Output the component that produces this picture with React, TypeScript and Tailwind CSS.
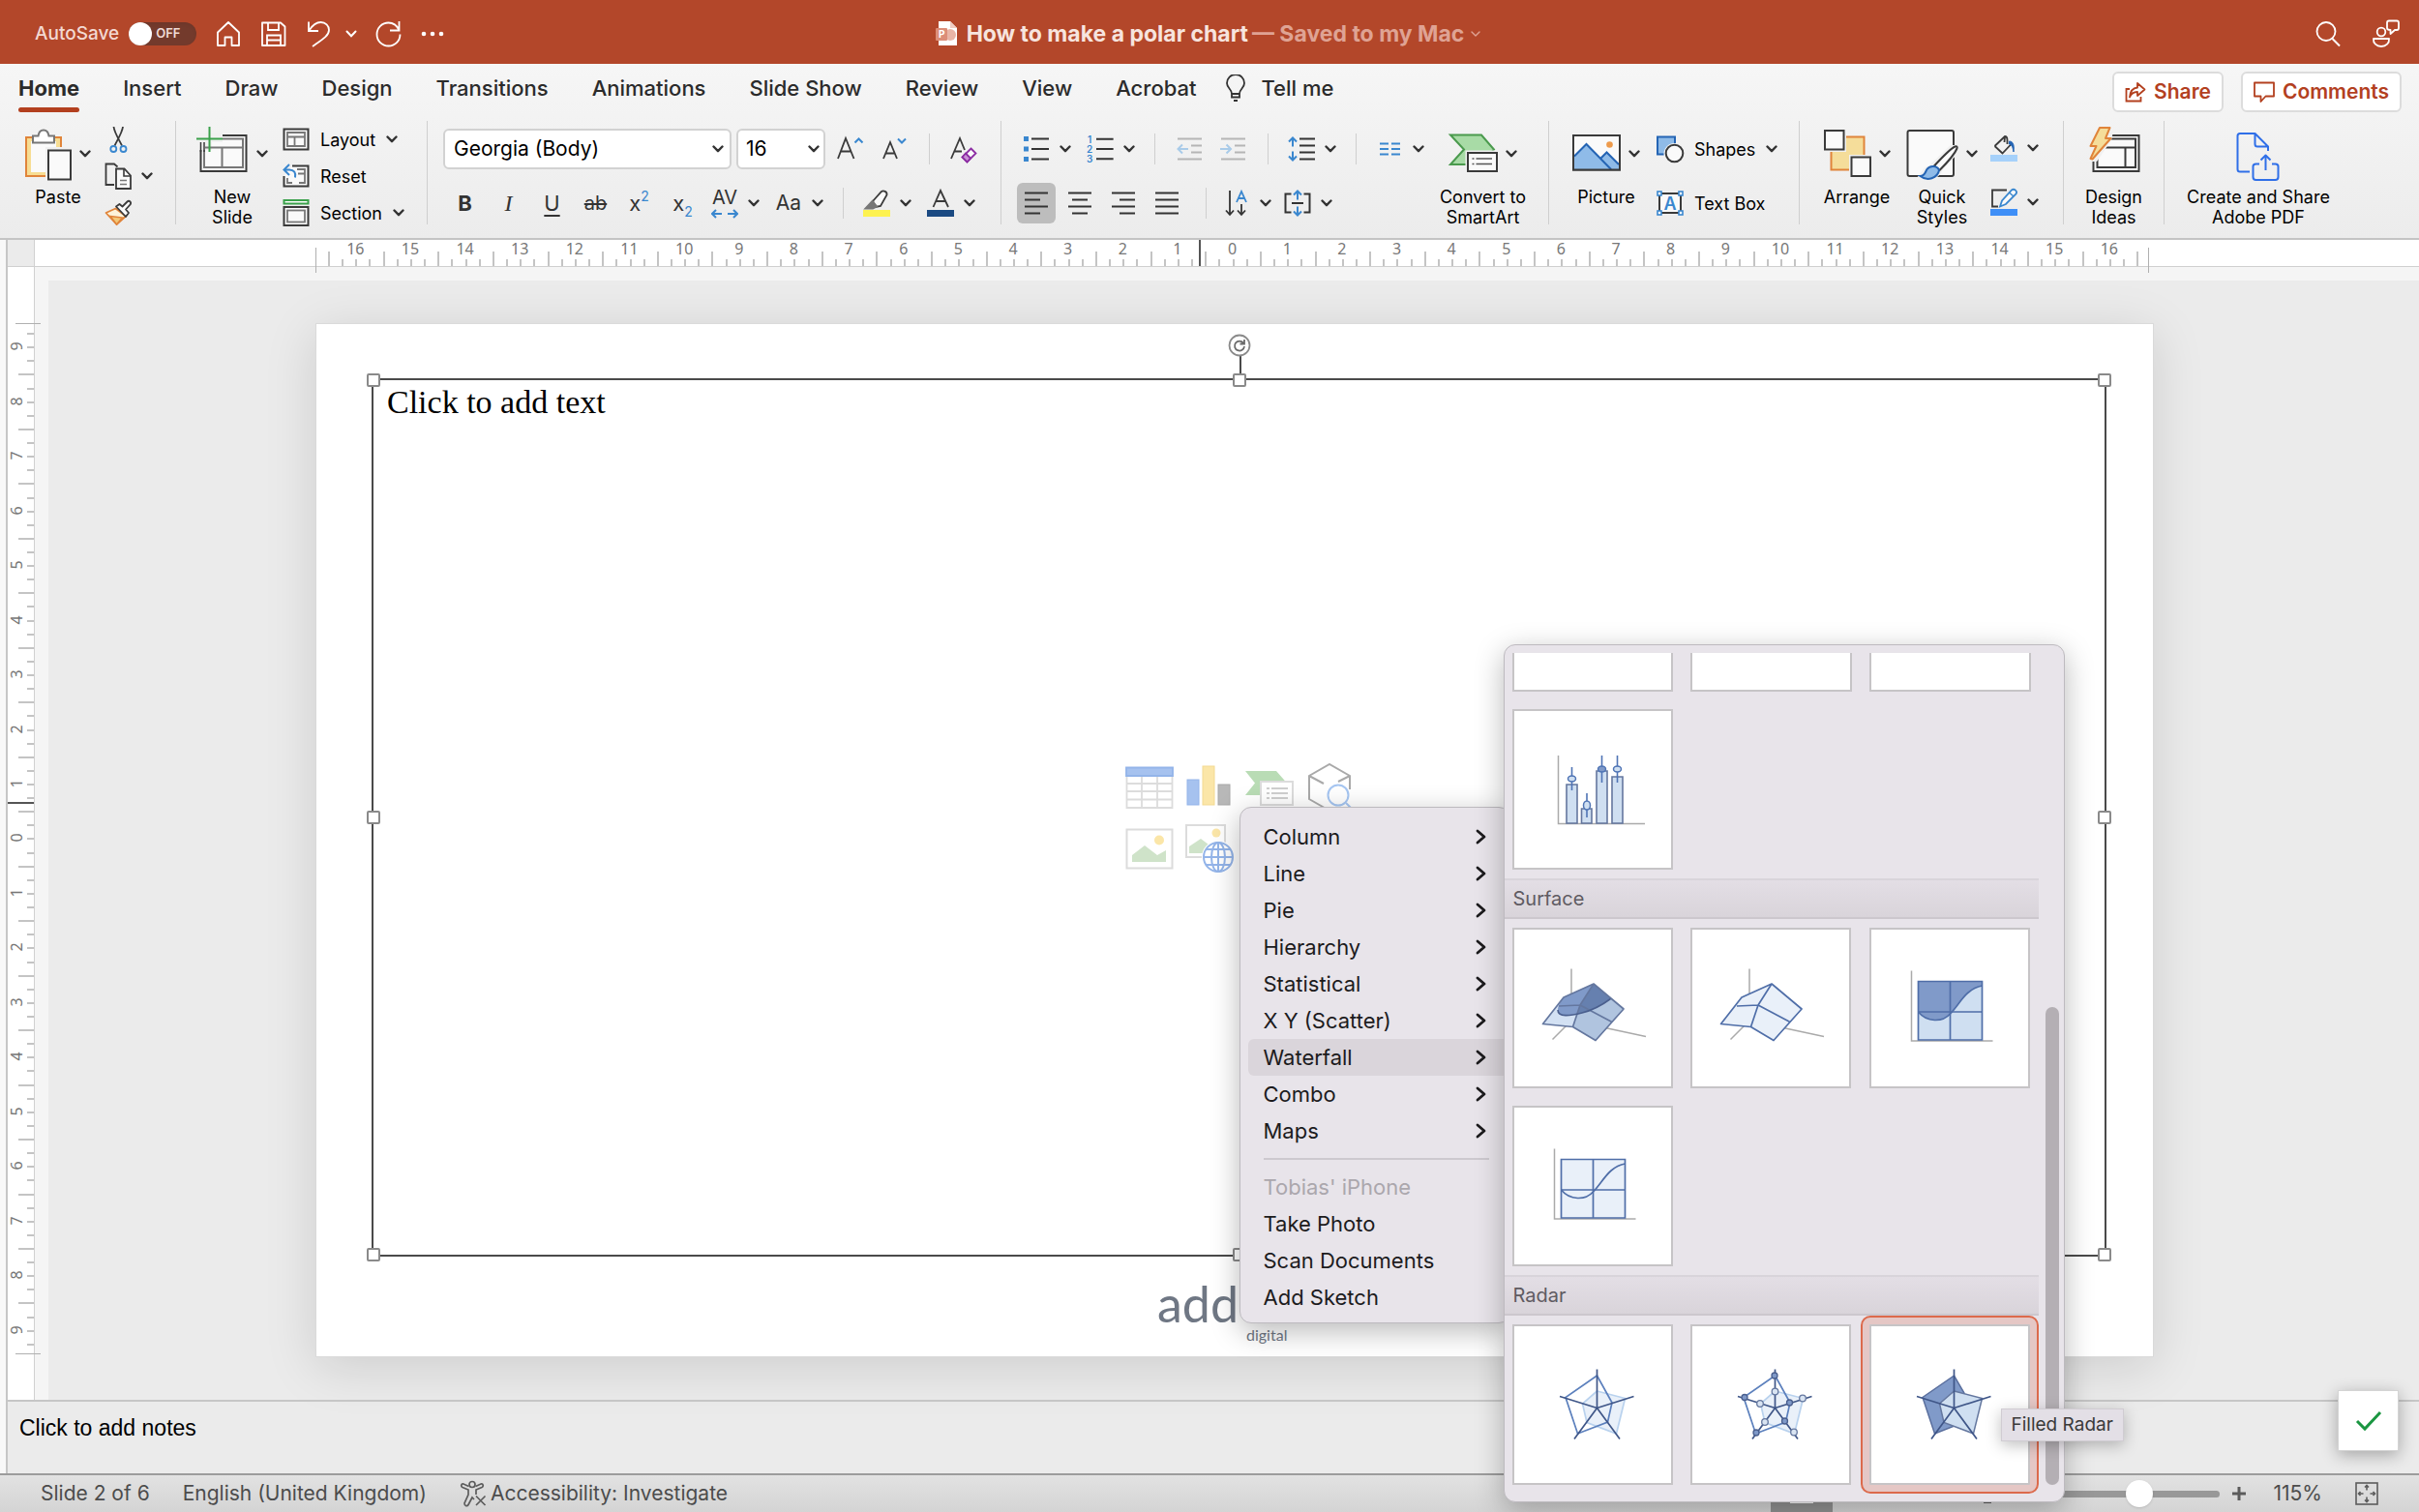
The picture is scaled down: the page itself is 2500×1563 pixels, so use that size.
import type { ReactNode } from "react"
import { ChevronDown } from "lucide-react"
import clsx from "clsx"

const tabs = ["Home", "Insert", "Draw", "Design", "Transitions", "Animations", "Slide Show", "Review", "View", "Acrobat"]

const chartMenu = ["Column", "Line", "Pie", "Hierarchy", "Statistical", "X Y (Scatter)", "Waterfall", "Combo", "Maps"]

const photoMenu = ["Take Photo", "Scan Documents", "Add Sketch"]

const horizontalUnits = Array.from({ length: 33 }, (_, i) => Math.abs(i - 16))
const verticalUnits = Array.from({ length: 19 }, (_, i) => Math.abs(i - 9))

/* ---------- shared bits ---------- */

function Chevron() {
  return (
    <svg width="12" height="8" viewBox="0 0 12 8" fill="none" className="shrink-0">
      <path d="M1.5 1.5 6 6.2l4.5-4.7" stroke="#333" strokeWidth="2.4" strokeLinecap="round" strokeLinejoin="round" />
    </svg>
  )
}

function Icon({ children, w = 28, h = 28 }: { children: ReactNode; w?: number; h?: number }) {
  return (
    <svg width={w} height={h} viewBox={`0 0 ${w} ${h}`} fill="none" stroke="#3a3a3a" strokeWidth="2" className="shrink-0 overflow-visible">
      {children}
    </svg>
  )
}

function GroupLine() {
  return <div className="w-px h-[107px] shrink-0 bg-[#cfcfcf]" />
}

function Divider() {
  return <div className="w-px h-8 mx-5 shrink-0 bg-[#cfcfcf]" />
}

function BigButton({ icon, lines, drop = false, className }: { icon: ReactNode; lines: string[]; drop?: boolean; className?: string }) {
  return (
    <button className={clsx("flex flex-col items-center shrink-0 text-[18px] leading-[21px]", className)}>
      <span className="flex items-center gap-2 h-[68px]">
        {icon}
        {drop && <Chevron />}
      </span>
      {lines.map((line) => (
        <span key={line} className="whitespace-nowrap">{line}</span>
      ))}
    </button>
  )
}

function Tool({ label, children, drop = false }: { label: string; children: ReactNode; drop?: boolean }) {
  return (
    <button aria-label={label} className="flex items-center gap-[10px] shrink-0">
      {children}
      {drop && <Chevron />}
    </button>
  )
}

function TextTool({ label, children, drop = false, className }: { label: string; children: ReactNode; drop?: boolean; className: string }) {
  return (
    <button className={clsx("flex items-center gap-[11px] text-[18px] whitespace-nowrap", className)}>
      {children}
      <span>{label}</span>
      {drop && <Chevron />}
    </button>
  )
}

/* ---------- title bar ---------- */

function TitleBar() {
  return (
    <header className="h-[66px] grid grid-cols-[1fr_auto_1fr] items-center bg-[#b3472a] text-white">
      <div className="flex items-center gap-[19px] pl-9 h-[70px]">
        <label className="flex items-center gap-[10px] text-[19px] font-medium text-[#f3d9d2]">
          AutoSave
          <input type="checkbox" className="sr-only" />
          <span className="flex items-center w-[70px] h-6 rounded-full bg-[#733a2c] shadow-inner text-[13px] font-semibold text-[#f0dcd6]">
            <span className="size-6 mr-1 rounded-full bg-white" />
            OFF
          </span>
        </label>
        <button aria-label="Home">
          <Icon>
            <path d="M3 26V12.500L14 2l11 10.500V26h-7.500v-8.500h-7V26z" stroke="#fff" strokeWidth="1.800" strokeLinejoin="round" />
          </Icon>
        </button>
        <button aria-label="Save">
          <Icon>
            <g stroke="#fff" strokeWidth="1.800">
              <path d="M2 2.500h19l4.500 4V26H2z" strokeLinejoin="round" />
              <path d="M8 3v7h11V3M7 26V15.500h14V26M7 20.500h14" />
            </g>
          </Icon>
        </button>
        <div className="flex items-center gap-[13px]">
          <button aria-label="Undo">
            <Icon>
              <path d="M3 1.500V11h10M3.500 10.500C7 5 11 2 15.500 2c5 0 8.500 3.500 8.500 8 0 6-7 10-17 17" stroke="#fff" strokeWidth="1.800" />
            </Icon>
          </button>
          <svg width="12" height="8" viewBox="0 0 12 8" fill="none">
            <path d="M1.500 1.500 6 6.200l4.500-4.700" stroke="#fff" strokeWidth="2" strokeLinecap="round" />
          </svg>
        </div>
        <button aria-label="Redo">
          <Icon>
            <path d="M24.500 1v9.500H15M24.500 10C22 5 18.500 2.500 13.500 2.500c-6.500 0-12 5-12 12s5.500 12 12 12 12-5 12-12" stroke="#fff" strokeWidth="1.800" />
          </Icon>
        </button>
        <button aria-label="More commands">
          <Icon>
            <g fill="#fff" stroke="none">
              <circle cx="3" cy="14" r="2.300" />
              <circle cx="12" cy="14" r="2.300" />
              <circle cx="21" cy="14" r="2.300" />
            </g>
          </Icon>
        </button>
      </div>

      <h1 className="flex items-center h-[70px] text-[23px] font-bold text-[#f7e4de]">
        <svg width="24" height="26" viewBox="0 0 24 26" className="mr-2">
          <path d="M3 0h12l7 7v18H3z" fill="#fff" />
          <path d="M15 0l7 7h-7z" fill="#f0cdc3" />
          <circle cx="15" cy="14" r="6" fill="#e9b5a6" />
          <rect x="0" y="7" width="12" height="13" rx="1" fill="#dc8e78" />
          <text x="3" y="17" fontSize="10" fontWeight="700" fill="#fff" fontFamily="Inter, sans-serif">P</text>
        </svg>
        How to make a polar chart
        <span className="ml-1 text-[#dfa394]">— Saved to my Mac</span>
        <ChevronDown className="ml-1 size-4 text-[#dfa394]" strokeWidth={2} />
      </h1>

      <div className="flex items-center justify-end gap-8 h-[70px] pr-5">
        <button aria-label="Search">
          <Icon>
            <path d="M18.500 19l7.500 7.500" stroke="#fff" />
            <circle cx="12" cy="11.500" r="9.500" stroke="#fff" strokeWidth="1.800" />
          </Icon>
        </button>
        <button aria-label="Account">
          <Icon>
            <g stroke="#fff" strokeWidth="1.800" strokeLinejoin="round">
              <circle cx="9" cy="12" r="4.300" />
              <path d="M1 19h16c.5 4.500-3 8-8 8s-8.500-3.500-8-8z" />
              <path d="M15 2.500c0-1.500.5-2 2-2h8c1.500 0 2 .5 2 2V8c0 1.500-.5 2-2 2h-2l-4.500 4v-4C16.500 10 15 9.500 15 8z" />
            </g>
          </Icon>
        </button>
      </div>
    </header>
  )
}

/* ---------- ribbon icons ---------- */

function PasteIcon() {
  return (
    <Icon w={48} h={56}>
      <rect x="1" y="11" width="36" height="40" fill="#f7dd93" stroke="#e0843a" />
      <rect x="6" y="15" width="26" height="32" fill="#fafafa" stroke="none" />
      <path d="M8 16.500V9.500h5.500c.5-3.500 2.500-6 5.500-6s5 2.500 5.500 6H30v7z" fill="#fff" stroke="#777" />
      <path d="M21 21h28v35H21z" fill="#f1f1f1" stroke="none" />
      <rect x="24" y="24.500" width="23" height="30" fill="#fafafa" />
    </Icon>
  )
}

function CutIcon() {
  return (
    <Icon>
      <path d="M9.500 1c.5 5 3 9 8.500 19.500M19 1c-.5 5-3 9-8.500 19.500" strokeWidth="1.800" />
      <circle cx="9.300" cy="24" r="3" stroke="#3a87cf" strokeWidth="1.800" />
      <circle cx="19.500" cy="24" r="3" stroke="#3a87cf" strokeWidth="1.800" />
    </Icon>
  )
}

function CopyIcon() {
  return (
    <Icon>
      <path d="M10 23H1.500V1.500H10l3.500 3" strokeWidth="1.800" />
      <path d="M12 6.500h8.500l6.500 7v13.500H12z" fill="#fafafa" strokeWidth="1.800" />
      <path d="M20 7v7h7" strokeWidth="1.600" />
      <path d="M16 18.500h7M16 22.500h7" stroke="#777" strokeWidth="1.500" />
    </Icon>
  )
}

function PainterIcon() {
  return (
    <Icon>
      <path d="M11.500 9.500 1.500 14l11 12 9.500-8.500z" fill="#fdf3da" stroke="#e0843a" strokeWidth="1.800" strokeLinejoin="round" />
      <path d="M6 17.500l12.500 1.500-6 7z" fill="#f3c878" stroke="#e0843a" strokeWidth="1.500" />
      <path d="M12 7.500l3.500-2.500 3 2.500 5-5c2-2 5 1 3 3l-4.500 5 3 3.500-3 4z" fill="#fafafa" strokeWidth="1.800" strokeLinejoin="round" />
    </Icon>
  )
}

function NewSlideIcon() {
  return (
    <Icon w={54} h={56}>
      <rect x="4.500" y="9" width="47" height="37" fill="#fafafa" />
      <path d="M8 12.500h40V42H8zM8 21.500h40M26.500 21.500V42" stroke="#777" />
      <path d="M0 7h27v9H16v8H3v-8H0z" fill="#f1f1f1" stroke="none" />
      <path d="M9 21.500h7" stroke="#777" />
      <path d="M4.500 16v10M8 16v10" stroke="#3a3a3a" strokeWidth="1.500" />
      <path d="M0 12.500h27M13.500 0v26" stroke="#3aa14b" />
    </Icon>
  )
}

function LayoutIcon() {
  return (
    <Icon>
      <rect x="1.500" y="3.500" width="25" height="21" fill="#fafafa" />
      <path d="M5 7h18v14H5zM5 11.500h18M12.500 11.500V21" stroke="#777" strokeWidth="1.800" />
    </Icon>
  )
}

function ResetIcon() {
  return (
    <Icon>
      <path d="M10 3.500h16.500v21h-25V14" fill="#fafafa" />
      <path d="M15 7h8v14h-6M5 16v5h5M16 11.500h7" stroke="#777" strokeWidth="1.800" />
      <path d="M7 2 1.500 7.500 7 13M2 7.500h5c5 0 7 3 6 8" stroke="#3a87cf" />
    </Icon>
  )
}

function SectionIcon() {
  return (
    <Icon>
      <rect x="1.500" y="1" width="25" height="3.500" fill="#fff" stroke="#3aa14b" />
      <rect x="1.500" y="8" width="25" height="19" fill="#fafafa" />
      <rect x="5" y="11.500" width="18" height="12" stroke="#777" strokeWidth="1.800" />
    </Icon>
  )
}

function SmartArtIcon() {
  return (
    <Icon w={51} h={56}>
      <path d="M2 8.500h32l13 15-13 15.500H2l14-15.500z" fill="#a8dba6" stroke="#4a9a4d" />
      <path d="M17.500 24.500H51V49H17.500z" fill="#f1f1f1" stroke="none" />
      <rect x="20" y="27" width="30" height="19" fill="#fafafa" />
      <path d="M24.500 33h2M28.500 33H45M24.500 38.500h2M28.500 38.500H45" stroke="#555" strokeWidth="1.600" />
    </Icon>
  )
}

function PictureIcon() {
  return (
    <Icon w={50} h={56}>
      <rect x="1" y="9" width="48" height="35.500" fill="#fafafa" />
      <path d="M2 30.500 14.500 18l26 26H2z" fill="#8fbbe8" stroke="none" />
      <path d="M29.500 32l6-5.500L48 39v5h-7z" fill="#8fbbe8" stroke="none" />
      <path d="M2 30.500 14.500 18l25.500 26M29.500 32.500l6-6L48 39" stroke="#2464b4" />
      <circle cx="38.500" cy="18.500" r="3.300" fill="#ee9b4c" stroke="none" />
      <rect x="1" y="9" width="48" height="35.500" />
    </Icon>
  )
}

function ShapesIcon() {
  return (
    <Icon>
      <rect x="1" y="1.500" width="18" height="18" fill="#8fbbe8" stroke="#2464b4" />
      <circle cx="18.500" cy="19" r="11" fill="#f1f1f1" stroke="none" />
      <circle cx="18.500" cy="18.500" r="8.800" fill="#fafafa" />
    </Icon>
  )
}

function TextBoxIcon() {
  return (
    <Icon>
      <path d="M3 4h22v20H3z" fill="#fafafa" />
      <text x="14" y="20.500" textAnchor="middle" fontSize="18" fontWeight="600" fill="#3a87cf" stroke="none" fontFamily="Inter, sans-serif">A</text>
      <g fill="#fff" stroke="#3a87cf" strokeWidth="1.600">
        <rect x="1" y="2" width="4" height="4" />
        <rect x="23" y="2" width="4" height="4" />
        <rect x="1" y="22" width="4" height="4" />
        <rect x="23" y="22" width="4" height="4" />
      </g>
    </Icon>
  )
}

function ArrangeIcon() {
  return (
    <Icon w={50} h={56}>
      <rect x="8.500" y="10.500" width="34" height="34" fill="#f5dd9a" stroke="#e0843a" />
      <path d="M0 2h24v24H0zM27 29h23v24H27z" fill="#f1f1f1" stroke="none" />
      <rect x="2" y="4" width="19.500" height="19.500" fill="#fafafa" />
      <rect x="29.500" y="31.500" width="19.500" height="19.500" fill="#fafafa" />
    </Icon>
  )
}

function QuickStylesIcon() {
  return (
    <Icon w={54} h={56}>
      <rect x="1.500" y="4" width="47.500" height="47" rx="2" fill="#fafafa" />
      <path d="M10 53c6-3 6-11 14-13L46 19h8v8L38 44c-3 8-10 12-20 12z" fill="#f1f1f1" stroke="none" />
      <path d="M29 40.500C37 32 45 23 50.500 20.500c2-.5 2.500.5 2 2-2.500 6-9.500 14-18 22.500z" fill="#fafafa" />
      <path d="M14.500 51c5 0 5-4 7-7 3-4.500 11-4 12.500 1-1.500 8-12 12-19.500 6z" fill="#8fbbe8" stroke="#2464b4" />
    </Icon>
  )
}

function FillIcon() {
  return (
    <Icon>
      <path d="M4.500 12 15 2c2 0 2.500 1.500 2.500 4v4M4.500 12l8 7.500 9.500-10M15 2l-.5 6" strokeWidth="1.800" />
      <path d="M19.500 7c3.500 0 5.500 3 4.500 11-1-5-1.500-7-4.500-8z" fill="#2464b4" stroke="#2464b4" strokeWidth="1" />
      <rect x="0" y="21" width="28" height="7" fill="#a6d1fa" stroke="none" />
    </Icon>
  )
}

function OutlineIcon() {
  return (
    <Icon>
      <path d="M8 18.500H2v-17h15" strokeWidth="1.800" />
      <path d="M10 18.500l2-6L22 1.500c2.500-2 6.500 1 4.500 4L16 16z" fill="#fafafa" stroke="#3a87cf" strokeWidth="1.800" />
      <path d="M19.500 4l4.500 4" stroke="#3a87cf" strokeWidth="1.500" />
      <rect x="0" y="21" width="28" height="7" fill="#3f8ff7" stroke="none" />
    </Icon>
  )
}

function DesignIdeasIcon() {
  return (
    <Icon w={54} h={56}>
      <rect x="5.500" y="9" width="47" height="37" fill="#fafafa" />
      <path d="M9.500 12.500H49V42H9.500zM9.500 21.500H49M38.500 21.500V42" />
      <path d="M2 5h24L24 14 9 36H0z" fill="#f1f1f1" stroke="none" />
      <path d="M12 1h10.500L18 12h5.500L4.500 33.500 2.500 33 8.500 20H2.500z" fill="#f5dd9a" stroke="#e0843a" strokeLinejoin="round" />
    </Icon>
  )
}

function PdfIcon() {
  return (
    <Icon w={46} h={56}>
      <g stroke="#2f6fe8" strokeLinejoin="round">
        <path d="M14 46.500H4c-2 0-2.500-1-2.500-2.500V9.500C1.500 8 2 7 4 7h15.500L33 20.500V25M19.500 7v11c0 1.500.5 2.500 2.500 2.500h11" />
        <path d="M24 38.500h-3.500c-2 0-3 1-3 2.500v11c0 2 1 3 3 3h20c2 0 3-1 3-3V41c0-1.500-1-2.500-3-2.500H37" />
        <path d="M30.500 45V29.500M25.500 34.500l5-5 5 5" />
      </g>
    </Icon>
  )
}

function LinesIcon({ rows, color = "#333" }: { rows: [number, number][]; color?: string }) {
  return (
    <Icon>
      {rows.map(([x1, x2], i) => (
        <path key={i} d={`M${x1} ${3.5 + i * 7}H${x2}`} stroke={color} />
      ))}
    </Icon>
  )
}

/* ---------- ribbon ---------- */

function FontControls() {
  return (
    <div className="shrink-0 pl-4 pr-[25px]">
      <div className="flex items-center h-[58px]">
        <div className="relative mr-[5px]">
          <select aria-label="Font" className="appearance-none w-[298px] h-[42px] pl-[9px] rounded-md border-2 border-[#d2d2d2] bg-white text-[21px]">
            <option>Georgia (Body)</option>
          </select>
          <span className="absolute right-2 top-0 flex items-center h-full pointer-events-none"><Chevron /></span>
        </div>
        <div className="relative mr-[11px]">
          <select aria-label="Font size" className="appearance-none w-[92px] h-[42px] pl-2 rounded-md border-2 border-[#d2d2d2] bg-white text-[21px]">
            <option>16</option>
          </select>
          <span className="absolute right-[6px] top-0 flex items-center h-full pointer-events-none"><Chevron /></span>
        </div>
        <div className="flex items-center gap-4">
          <Tool label="Increase font size">
            <Icon w={30}>
              <path d="M2 24 10 3l8.500 21M5 16.500h10.500" strokeWidth="1.800" />
              <path d="M19.500 7.500l4-4 4 4" stroke="#3a87cf" />
            </Icon>
          </Tool>
          <Tool label="Decrease font size">
            <Icon w={30}>
              <path d="M3 24 10 7l7 17M5.500 18.500h9" strokeWidth="1.800" />
              <path d="M18 3.500l4 4 4-4" stroke="#3a87cf" />
            </Icon>
          </Tool>
        </div>
        <Divider />
        <Tool label="Clear formatting">
          <Icon>
            <path d="M2 24 11 3l5 12M5.500 16.500H13" strokeWidth="1.800" />
            <path d="M22.500 13.500l5 5-9 9-5-5z" fill="#fafafa" stroke="#8c2da3" strokeWidth="1.800" />
            <path d="M17 18.500l5 5-3.500 4-5-5z" fill="#c98fd6" stroke="#8c2da3" strokeWidth="1.800" />
          </Icon>
        </Tool>
      </div>

      <div className="flex items-center h-[54px] text-[22px] text-[#333]">
        <div className="flex mr-[7px] *:w-[45px]">
          <button className="font-bold">B</button>
          <button className="font-['Liberation_Serif'] text-[24px] italic">I</button>
          <button className="underline underline-offset-4">U</button>
          <button className="text-[20px] line-through">ab</button>
          <button aria-label="Superscript" className="flex items-center justify-center">
            x<span className="mb-4 text-[14px] text-[#3a87cf]">2</span>
          </button>
          <button aria-label="Subscript" className="flex items-center justify-center">
            x<span className="mt-4 text-[14px] text-[#3a87cf]">2</span>
          </button>
        </div>
        <div className="flex gap-4">
          <Tool label="Character spacing" drop>
            <span className="relative w-7 h-8 text-[20px] leading-[20px]">
              AV
              <svg width="28" height="10" viewBox="0 0 28 10" fill="none" stroke="#3a87cf" strokeWidth="2" className="absolute left-0 bottom-0">
                <path d="M1 5h10M5 1 1 5l4 4M17 5h10M23 1l4 4-4 4" />
              </svg>
            </span>
          </Tool>
          <Tool label="Change case" drop>
            <span className="w-7 text-[21px]">Aa</span>
          </Tool>
        </div>
        <Divider />
        <div className="flex gap-4">
          <Tool label="Text highlight colour" drop>
            <Icon>
              <path d="M10 12 19 2c2-1.500 6 0 5.500 3.500L18 17l-5 1z" fill="#fafafa" strokeWidth="1.800" />
              <path d="M9.500 12 14 17.500l-4 2H2.500z" fill="#777" stroke="#777" />
              <rect x="0" y="21" width="28" height="7" fill="#fdf250" stroke="none" />
            </Icon>
          </Tool>
          <Tool label="Font colour" drop>
            <Icon>
              <path d="M6.500 18 14 1l8 17M9.500 12h9.500" strokeWidth="1.800" />
              <rect x="0" y="21" width="28" height="7" fill="#1b4a82" stroke="none" />
            </Icon>
          </Tool>
        </div>
      </div>
    </div>
  )
}

function ParagraphControls() {
  return (
    <div className="shrink-0 w-[438px] pl-4">
      <div className="flex items-center h-[58px] pl-[6px]">
        <div className="flex gap-4">
          <Tool label="Bullets" drop>
            <Icon>
              <path d="M9 3.500h18M9 14h18M9 24.500h18" stroke="#333" />
              <path d="M1 1h5v5H1zM1 11.500h5v5H1zM1 22h5v5H1z" fill="#3a87cf" stroke="none" />
            </Icon>
          </Tool>
          <Tool label="Numbering" drop>
            <span className="flex items-center gap-1 w-7">
              <span className="flex flex-col text-[10px] leading-[10px] font-semibold text-[#3a87cf]">
                <span>1</span>
                <span>2</span>
                <span>3</span>
              </span>
              <svg width="18" height="28" viewBox="0 0 18 28" stroke="#333" strokeWidth="2">
                <path d="M0 3.500h18M0 14h18M0 24.500h18" />
              </svg>
            </span>
          </Tool>
        </div>
        <Divider />
        <div className="flex gap-4">
          <Tool label="Decrease indent">
            <Icon w={30}>
              <path d="M3 3.500h25M17 10.500h11M17 17.500h11M3 24.500h25" stroke="#b5b5b5" />
              <path d="M3 14h11M8 9.500 3.500 14 8 18.500" stroke="#a9cbe9" />
            </Icon>
          </Tool>
          <Tool label="Increase indent">
            <Icon w={30}>
              <path d="M2 3.500h25M16 10.500h11M16 17.500h11M2 24.500h25" stroke="#b5b5b5" />
              <path d="M1 14h11M7.500 9.500 12 14l-4.500 4.500" stroke="#a9cbe9" />
            </Icon>
          </Tool>
        </div>
        <Divider />
        <Tool label="Line spacing" drop>
          <Icon>
            <path d="M12 3.500h16M12 10.500h16M12 17.500h16M12 24.500h16" stroke="#333" />
            <path d="M5 3v8.500M1 6.500l4-4 4 4M5 16.500V25M1 21.500l4 4 4-4" stroke="#3a87cf" />
          </Icon>
        </Tool>
        <Divider />
        <Tool label="Columns" drop>
          <Icon>
            <path d="M4 8.500h9M4 14h9M4 19.500h9M16 8.500h9M16 14h9M16 19.500h9" stroke="#3a87cf" />
          </Icon>
        </Tool>
      </div>

      <div className="flex items-center h-[54px]">
        <div className="flex gap-[5px] *:flex *:items-center *:justify-center *:w-10 *:h-[42px] *:rounded-md">
          <button aria-label="Align left" className="bg-[#bdbdbd]">
            <LinesIcon rows={[[2, 26], [2, 18], [2, 26], [2, 18]]} />
          </button>
          <button aria-label="Centre">
            <LinesIcon rows={[[2, 26], [6, 22], [2, 26], [6, 22]]} />
          </button>
          <button aria-label="Align right">
            <LinesIcon rows={[[2, 26], [10, 26], [2, 26], [10, 26]]} />
          </button>
          <button aria-label="Justify">
            <LinesIcon rows={[[2, 26], [2, 26], [2, 26], [2, 26]]} />
          </button>
        </div>
        <Divider />
        <div className="flex gap-[13px]">
          <Tool label="Text direction" drop>
            <Icon w={25}>
              <path d="M4 1v25M0 21.500l4 4.500 4-4.500M16 15v11M12 21.500l4 4.500 4-4.500" stroke="#333" strokeWidth="1.800" />
              <path d="M11 13l5-11 5 11M13 9h6.500" stroke="#3a87cf" strokeWidth="1.800" />
            </Icon>
          </Tool>
          <Tool label="Align text" drop>
            <Icon>
              <path d="M7.500 4.500H1.500v19h6M20.500 4.500h6v19h-6M8 14h12" stroke="#333" />
              <path d="M14 1.500v9M10 5.500l4-4 4 4M14 17.500v9M10 22.500l4 4 4-4" stroke="#3a87cf" />
            </Icon>
          </Tool>
        </div>
      </div>
    </div>
  )
}

function Ribbon() {
  return (
    <section className="h-[182px] border-b-2 border-[#c4c4c4] bg-gradient-to-b from-[#f6f6f6] to-[#ececec] overflow-hidden">
      <div className="flex items-start h-[59px] pl-[19px] pr-[18px]">
        <nav className="flex gap-[45px] text-[22px] font-medium text-[#2b2b2b]">
          {tabs.map((tab, index) => (
            <button
              key={tab}
              className={clsx("h-[50px] whitespace-nowrap", index === 0 && "relative font-bold after:absolute after:inset-x-0 after:bottom-0 after:h-[5px] after:rounded-full after:bg-[#b3401f]")}
            >
              {tab}
            </button>
          ))}
        </nav>
        <button className="flex items-center gap-4 h-[50px] ml-[31px] text-[22px] font-medium text-[#2b2b2b]">
          <svg width="20" height="28" viewBox="0 0 20 28" fill="none" stroke="#333" strokeWidth="1.800">
            <path d="M6 20c0-5-5-6-5-11a9 9 0 0 1 18 0c0 5-5 6-5 11zM6 20v3.500h8V20M8 27h4" />
          </svg>
          Tell me
        </button>
        <div className="flex gap-[18px] ml-auto pt-2 text-[21px] font-semibold text-[#b3401f]">
          <button className="flex items-center justify-center gap-2 w-[115px] h-[42px] rounded-md border-2 border-[#dcdcdc] bg-white">
            <svg width="22" height="22" viewBox="0 0 22 22" fill="none" stroke="#b3401f" strokeWidth="1.800">
              <path d="M5 8H1.500v12.500h15V16" />
              <path d="M13 2l7.500 6.500L13 15v-4c-4 0-6.500 1.500-8 5.500.5-6 3-9.500 8-10z" strokeLinejoin="round" />
            </svg>
            Share
          </button>
          <button className="flex items-center justify-center gap-2 w-[166px] h-[42px] rounded-md border-2 border-[#dcdcdc] bg-white">
            <svg width="22" height="22" viewBox="0 0 22 22" fill="none" stroke="#b3401f" strokeWidth="1.800">
              <path d="M1 1.500h20v14H12.500L7.500 21v-5.500H1z" strokeLinejoin="round" />
            </svg>
            Comments
          </button>
        </div>
      </div>

      <div className="flex items-start text-black">
        <div className="flex gap-[10px] shrink-0 pl-[22px] pr-[23px]">
          <BigButton icon={<PasteIcon />} lines={["Paste"]} drop className="w-[76px]" />
          <div className="flex flex-col *:h-[38px]">
            <Tool label="Cut"><CutIcon /></Tool>
            <Tool label="Copy" drop><CopyIcon /></Tool>
            <Tool label="Format painter"><PainterIcon /></Tool>
          </div>
        </div>
        <GroupLine />
        <div className="flex gap-[14px] shrink-0 pl-5 pr-[23px]">
          <BigButton icon={<NewSlideIcon />} lines={["New", "Slide"]} drop className="w-[76px]" />
          <div className="flex flex-col w-[126px]">
            <TextTool label="Layout" drop className="h-[38px]"><LayoutIcon /></TextTool>
            <TextTool label="Reset" className="h-[38px]"><ResetIcon /></TextTool>
            <TextTool label="Section" drop className="h-[38px]"><SectionIcon /></TextTool>
          </div>
        </div>
        <GroupLine />
        <FontControls />
        <GroupLine />
        <ParagraphControls />
        <BigButton icon={<SmartArtIcon />} lines={["Convert to", "SmartArt"]} drop className="w-[127px] pr-2" />
        <GroupLine />
        <div className="flex gap-[14px] shrink-0 pl-[21px] pr-[22px]">
          <BigButton icon={<PictureIcon />} lines={["Picture"]} drop className="w-[76px]" />
          <div className="w-[125px]">
            <TextTool label="Shapes" drop className="h-[58px]"><ShapesIcon /></TextTool>
            <TextTool label="Text Box" className="h-[54px]"><TextBoxIcon /></TextTool>
          </div>
        </div>
        <GroupLine />
        <div className="flex gap-3 shrink-0 pl-[21px] pr-[25px]">
          <BigButton icon={<ArrangeIcon />} lines={["Arrange"]} drop className="w-[76px]" />
          <BigButton icon={<QuickStylesIcon />} lines={["Quick", "Styles"]} drop className="w-[76px]" />
          <div className="*:h-[56px]">
            <Tool label="Shape fill" drop><FillIcon /></Tool>
            <Tool label="Shape outline" drop><OutlineIcon /></Tool>
          </div>
        </div>
        <GroupLine />
        <BigButton icon={<DesignIdeasIcon />} lines={["Design", "Ideas"]} className="w-[103px]" />
        <GroupLine />
        <BigButton icon={<PdfIcon />} lines={["Create and Share", "Adobe PDF"]} className="w-[194px]" />
      </div>
    </section>
  )
}

/* ---------- rulers ---------- */

function HorizontalRuler() {
  return (
    <div className="flex-1 relative h-7 pl-[290px] pr-[279px] border-b border-[#d0d0d0] bg-white">
      <div className="relative flex h-full pl-[13px] pr-[11px]">
        <span className="absolute left-0 top-2 w-px h-[26px] bg-[#b0b0b0]" />
        <span className="absolute right-0 top-2 w-px h-[26px] bg-[#b0b0b0]" />
        <span className="absolute left-[913px] top-0 w-[2px] h-full bg-[#555]" />
        {horizontalUnits.map((unit, index) => (
          <div key={index} className="relative flex-1 text-center font-['Noto_Sans'] text-[16px] leading-[18px] text-[#777]">
            {unit}
            <div className="absolute inset-x-0 bottom-0 flex items-end *:flex-1 *:h-[7px] *:border-l-2 *:border-[#c4c4c4]">
              <span className="h-[15px]!" />
              <span />
              <span />
              <span />
            </div>
          </div>
        ))}
        <span className="self-end w-0 h-[15px] border-l-2 border-[#c4c4c4]" />
      </div>
    </div>
  )
}

function VerticalRuler() {
  return (
    <div className="relative flex flex-col w-7 shrink-0 pt-[54px] pb-[44px] border-r border-[#d0d0d0] bg-white">
      <span className="absolute left-2 top-[58px] w-[26px] h-px bg-[#b0b0b0]" />
      <span className="absolute left-2 bottom-[47px] w-[26px] h-px bg-[#b0b0b0]" />
      <span className="absolute left-0 top-[553px] w-full h-[2px] bg-[#555]" />
      {verticalUnits.map((unit, index) => (
        <div key={index} className="relative flex-1 flex items-center font-['Noto_Sans'] text-[16px] leading-[20px] text-[#777]">
          <span className="w-[18px] text-center -rotate-90">{unit}</span>
          <div className="absolute inset-y-0 right-0 flex flex-col items-end *:flex-1 *:w-[7px] *:border-t-2 *:border-[#c4c4c4]">
            <span className={index === 0 ? "border-transparent!" : "w-[16px]!"} />
            <span />
            <span />
            <span />
          </div>
        </div>
      ))}
    </div>
  )
}

/* ---------- chart gallery ---------- */

function Tile({ label, children, selected = false }: { label: string; children: ReactNode; selected?: boolean }) {
  return (
    <button
      aria-label={label}
      className={clsx("size-[166px] border-2 border-[#c6c4c6] bg-white", selected && "relative outline-2 outline-offset-[7px] outline-[#dc6a4c] shadow-[0_0_0_7px_#e5c7c5] rounded-[1px]")}
    >
      <svg viewBox="2 2 162 162" fill="none" className="size-full">{children}</svg>
    </button>
  )
}

function StockChart() {
  return (
    <>
      <path d="M47.500 48v70.500H137" stroke="#aaa" strokeWidth="1.500" />
      <g fill="#cfdff1" stroke="#64779f" strokeWidth="1.600">
        <path d="M56 78h11v40H56zM71.500 103H82v15H71.500zM87 64h11v54H87zM103 70h11v48h-11z" />
      </g>
      <path d="M61.500 60v24M77 87v25M92.500 48v28M108.500 48v28" stroke="#4f74b5" strokeWidth="1.600" />
      <g fill="#cfdff1" stroke="#4f74b5" strokeWidth="1.500">
        <ellipse cx="61.500" cy="72" rx="4" ry="3" />
        <ellipse cx="77" cy="99.500" rx="3.500" ry="4.500" />
        <ellipse cx="92.500" cy="62" rx="4" ry="3" fill="#7f99c8" />
        <ellipse cx="108.500" cy="62" rx="4" ry="3" />
      </g>
    </>
  )
}

function SurfaceChart({ filled = false }: { filled?: boolean }) {
  return (
    <>
      <path d="M61 42.500V96L41.500 115.500M61 96l77 16.500" stroke="#aaa" strokeWidth="1.500" />
      <path d="M31.500 99.500 53 72l31-14-14 22-7.500 22.500z" fill={filled ? "#d3e1f3" : "#e9f0f9"} />
      <path d="M84 58l31 26-29 32.500-23.500-14L70 80z" fill={filled ? "#b0c4df" : "#e9f0f9"} />
      {filled && <path d="M53 72l31-14 17.500 15.500C90 82 80 86 72 88c-12 3-25 5-25-3 0-5 3-9 6-13z" fill="#809ac9" />}
      {filled && <path d="M84 58l17.500 15.500C90 82 80 86 67 89l3-9z" fill="#6680af" />}
      <path
        d="M31.500 99.500 53 72l31-14 31 26-29 32.500-23.500-14zM48 81l22-1 33 17.500M84 58 70 80l-7.500 22.500"
        stroke={filled ? "#64779f" : "#4f6ea8"}
        strokeWidth="1.700"
        strokeLinejoin="round"
      />
      {filled && <path d="M101.500 73.500C90 82 80 86 72 88c-12 3-25 5-25-3" stroke="#4a5f8e" strokeWidth="1.600" />}
    </>
  )
}

function ContourChart({ filled = false }: { filled?: boolean }) {
  return (
    <>
      <path d="M43.500 44.500v72.500h84" stroke="#aaa" strokeWidth="1.500" />
      <path d="M50.500 55.500h66V116h-66z" fill={filled ? "#cfdff1" : "#e9f0f9"} />
      {filled && <path d="M50.500 87c9 11 25 11 33 2 10-10 16-26 33-29v-4.500h-66z" fill="#809ac9" />}
      <path d="M50.500 55.500h66V116h-66zM50.500 87h66M83.500 55.500V116" stroke="#4f6ea8" strokeWidth="1.700" />
      <path d="M50.500 87c9 11 25 11 33 2 10-10 16-26 33-29" stroke="#4f6ea8" strokeWidth="1.700" />
    </>
  )
}

function RadarSpokes() {
  return <path d="M87.500 86.500V46.500M87.500 86.500l38-12M87.500 86.500l-38.500-12M87.500 86.500 111 118.500M87.500 86.500 64 118.500" stroke="#3f5688" strokeWidth="1.700" />
}

const radarMarks = [[87, 53], [56, 75.5], [68, 112], [97.5, 100], [102.5, 81]]
const radarLightMarks = [[87.5, 69.5], [116, 76.5], [107, 111.5], [77, 101], [72, 82]]

function RadarChart({ filled = false, markers = false }: { filled?: boolean; markers?: boolean }) {
  if (filled) {
    return (
      <>
        <path d="M87.500 53 55 75.500l12.500 37.500L88 105 98 71z" fill="#809ac9" stroke="#5a6f9e" strokeWidth="1.500" />
        <path d="M87.500 69l29 7.500-9 36.500L77 101.500 72.500 82z" fill="#cfdff1" stroke="#64779f" strokeWidth="1.500" />
        <RadarSpokes />
      </>
    )
  }
  return (
    <>
      <path d="M87.500 69l29 7.500-9 36.500L77 101.500 72.500 82z" fill="#e9f0f9" stroke="#b9d2ee" strokeWidth="1.700" />
      <path d="M87.500 53 55 75.500l12.500 37.500 31-12 4.500-20z" stroke="#5c80bd" strokeWidth="1.700" />
      <RadarSpokes />
      {markers && radarMarks.map(([x, y]) => <circle key={x} cx={x} cy={y} r="3" fill="#7f99c8" stroke="#4a5f8e" strokeWidth="1.300" />)}
      {markers && radarLightMarks.map(([x, y]) => <circle key={x} cx={x} cy={y} r="3.300" fill="#d9e4f2" stroke="#64779f" strokeWidth="1.300" />)}
    </>
  )
}

function GalleryHeading({ children }: { children: ReactNode }) {
  return (
    <h2 className="flex items-center h-[42px] pl-[9px] border-y-2 border-t-[#d8d4da] border-b-[#ccc7cd] bg-gradient-to-b from-[#e3dee5] to-[#d9d4da] text-[20px] text-[#5f5b62]">
      {children}
    </h2>
  )
}

function ChartGallery() {
  return (
    <div className="absolute -top-[169px] left-[272px] flex w-[580px] rounded-xl border border-[#bdbabf] bg-[#e8e4ea] pt-2 pb-[17px] shadow-[0_8px_30px_rgba(0,0,0,0.28)]">
      <div className="w-[552px]">
        <div className="grid grid-cols-3 gap-[18px] px-2 pb-[9px]">
          {["Open-High-Low", "Volume-High-Low", "Volume-Open-High"].map((name) => (
            <button key={name} aria-label={name} className="h-[40px] border-2 border-t-0 border-[#c6c4c6] bg-white" />
          ))}
          <Tile label="Volume-Open-High-Low-Close"><StockChart /></Tile>
        </div>
        <GalleryHeading>Surface</GalleryHeading>
        <div className="grid grid-cols-3 gap-[18px] px-2 py-[9px]">
          <Tile label="3-D Surface"><SurfaceChart filled /></Tile>
          <Tile label="Wireframe 3-D Surface"><SurfaceChart /></Tile>
          <Tile label="Contour"><ContourChart filled /></Tile>
          <Tile label="Wireframe Contour"><ContourChart /></Tile>
        </div>
        <GalleryHeading>Radar</GalleryHeading>
        <div className="grid grid-cols-3 gap-[18px] px-2 pt-[9px]">
          <Tile label="Radar"><RadarChart /></Tile>
          <Tile label="Radar with Markers"><RadarChart markers /></Tile>
          <Tile label="Filled Radar" selected><RadarChart filled /></Tile>
        </div>
      </div>
      <div className="self-end w-[14px] h-[494px] ml-[7px] rounded-full bg-[#b4afb4]" />
      <div role="tooltip" className="absolute left-[513px] bottom-[62px] flex items-center h-[34px] px-[10px] border border-[#d0ccd2] bg-[#e3dfe6] text-[19px] text-[#3a3a3a] whitespace-nowrap shadow-[0_4px_16px_rgba(0,0,0,0.25)]">
        Filled Radar
      </div>
    </div>
  )
}

function ContextMenu() {
  return (
    <div className="absolute left-1/2 top-1/2 -mt-[11px] w-[280px] rounded-xl border border-[#bdbabf] bg-[#e8e4ea] pt-[11px] pb-[7px] pl-2 text-[22px] text-[#1c1b1d] shadow-[0_8px_30px_rgba(0,0,0,0.28)]">
      {chartMenu.map((item) => (
        <button key={item} className={clsx("flex items-center justify-between w-full h-[38px] pl-4 pr-6 rounded-md", item === "Waterfall" && "bg-[#dad5db]")}>
          {item}
          <svg width="11" height="16" viewBox="0 0 11 16" fill="none" stroke="#1c1b1d" strokeWidth="2.800" strokeLinecap="round" strokeLinejoin="round">
            <path d="M2 2l7 6-7 6" />
          </svg>
        </button>
      ))}
      <hr className="my-[9px] ml-4 mr-[21px] border-t-2 border-[#cdc9cf]" />
      <p className="flex items-center h-[38px] pl-4 text-[#aba7ad]">Tobias&apos; iPhone</p>
      {photoMenu.map((item) => (
        <button key={item} className="flex items-center w-full h-[38px] pl-4">{item}</button>
      ))}
      <ChartGallery />
    </div>
  )
}

/* ---------- slide ---------- */

function InsertIcons() {
  return (
    <div className="absolute inset-0 flex items-center justify-center">
      <div className="grid grid-cols-4 grid-rows-2 gap-x-3 gap-y-[13px] *:size-[50px]">
        <button aria-label="Insert table">
          <svg viewBox="0 0 50 50" fill="none" stroke="#dcdcdc" strokeWidth="1.800">
            <path d="M1.500 5h47v41h-47zM2 21h46M2 29h46M2 37.500h46M17 13v33M33 13v33" />
            <path d="M1 4.500h48V13H1z" fill="#a6c2ef" stroke="#93b4e9" />
          </svg>
        </button>
        <button aria-label="Insert chart">
          <svg viewBox="0 0 50 50" strokeWidth="1">
            <rect x="2" y="17" width="12" height="26" fill="#a6c2ef" stroke="#93b4e9" />
            <rect x="18" y="3" width="12" height="40" fill="#fbe6a8" stroke="#f3da92" />
            <rect x="34" y="22" width="12" height="21" fill="#b8b8b8" stroke="#a8a8a8" />
          </svg>
        </button>
        <button aria-label="Insert SmartArt">
          <svg viewBox="0 0 50 50">
            <path d="M0 8h32l11 12.500L32 33H0l10-12.500z" fill="#b9dcb5" />
            <rect x="16" y="19" width="33" height="24" fill="#fff" stroke="#dcdcdc" strokeWidth="2" />
            <path d="M22 26h3M27 26h17M22 31h3M27 31h17M22 36h3M27 36h17" stroke="#cfcfcf" strokeWidth="2" />
          </svg>
        </button>
        <button aria-label="Insert 3D model">
          <svg viewBox="0 0 50 50" fill="none" stroke="#a9a9a9" strokeWidth="2">
            <path d="M25 49 4 37V13L25 1l21 12v14M4 13l15 8M46 13l-12 6" />
            <circle cx="34" cy="33" r="10.500" fill="#fff" stroke="#a6c6f2" />
            <path d="M42 41l7 7" stroke="#a6c6f2" />
          </svg>
        </button>
        <button aria-label="Insert picture">
          <svg viewBox="0 0 50 50" fill="none">
            <path d="M1.500 5.500h47v40h-47z" stroke="#dcdcdc" strokeWidth="2" />
            <circle cx="35" cy="16.500" r="5" fill="#fbe6a8" />
            <path d="M7 39V32l13-10 13 10 9-5v12z" fill="#cfe3c9" />
          </svg>
        </button>
        <button aria-label="Insert online picture">
          <svg viewBox="0 0 50 50" fill="none">
            <path d="M1 1h40v33H1z" stroke="#dcdcdc" strokeWidth="2" />
            <circle cx="32" cy="9" r="4.500" fill="#fbe6a8" />
            <path d="M4 30v-7l12-8 8 6v9z" fill="#cfe3c9" />
            <circle cx="34" cy="34" r="17" fill="#fff" />
            <g stroke="#93b4e9" strokeWidth="2">
              <circle cx="34" cy="34" r="15" />
              <ellipse cx="34" cy="34" rx="7" ry="15" />
              <path d="M19 34h30M21.500 26h25M21.500 42h25M34 19v30" />
            </g>
          </svg>
        </button>
      </div>
    </div>
  )
}

const handles = [
  "left-0 top-0",
  "left-1/2 top-0",
  "left-full top-0",
  "left-0 top-1/2",
  "left-full top-1/2",
  "left-0 top-full",
  "left-1/2 top-full",
  "left-full top-full",
]

function Slide() {
  return (
    <div className="flex-1 flex flex-col pt-[56px] pl-[57px] pr-[48px] border border-[#dadada] bg-white shadow-[0_10px_50px_rgba(0,0,0,0.13)]">
      <div className="relative flex-1 border-2 border-[#4a4a4a]">
        <p className="pl-[14px] pt-1 font-['Liberation_Serif',serif] text-[34px] leading-[38px] text-black">Click to add text</p>
        <InsertIcons />
        <span className="absolute left-1/2 -top-7 w-[2px] h-7 bg-[#4a4a4a]" />
        {handles.map((place) => (
          <span key={place} className={clsx("absolute size-[14px] -ml-[7px] -mt-[7px] rounded-[2px] border-2 border-[#8a8a8a] bg-white", place)} />
        ))}
        <svg width="24" height="24" viewBox="0 0 24 24" fill="none" stroke="#6a6a6a" strokeWidth="1.800" className="absolute left-1/2 -top-12 -ml-3">
          <circle cx="12" cy="12" r="10.500" fill="#fff" stroke="#8a8a8a" />
          <path d="M16 9.500a5 5 0 1 0 1 3.500M17 6v4.500h-4.500" />
        </svg>
        <ContextMenu />
      </div>
      <div className="flex flex-col h-[103px] pl-[812px] pt-[23px] text-[#6f7784]">
        <span className="font-['Lato'] text-[52px] leading-[50px]">addtwo</span>
        <span className="pl-[92px] font-['Lato'] text-[16px] leading-[16px]">digital</span>
      </div>
    </div>
  )
}

/* ---------- status bar ---------- */

function StatusBar() {
  return (
    <footer className="flex items-center h-10 pl-[42px] pr-[42px] border-t-2 border-[#9c9c9c] bg-gradient-to-b from-[#e2e2e2] to-[#d4d4d4] text-[21px] text-[#4c4c4c]">
      <span className="mr-[34px]">Slide 2 of 6</span>
      <button className="mr-[34px]">English (United Kingdom)</button>
      <button className="flex items-center gap-1">
        <svg width="28" height="28" viewBox="0 0 28 28" fill="none" stroke="#5c5c5c" strokeWidth="1.700">
          <circle cx="13" cy="4.500" r="3" />
          <path d="M9.500 6.500 4 4C1.500 3.500 1 6.500 3 7.500L9 10v5L5 24c0 3 3 3.500 4 1.500L13 18l2 2M16.500 6.500 22 4c2.500-.5 3 2.500 1 3.500L17 10v5" />
          <path d="M17 16.500l9.500 9.500M26.500 16.500 17 26" />
        </svg>
        Accessibility: Investigate
      </button>

      <div className="flex items-center ml-auto">
        <div className="flex *:flex *:items-center *:justify-center *:w-16 *:h-[38px]">
          <button aria-label="Normal view" className="bg-[#929292]">
            <span className="w-6 h-5 border-2 border-white" />
          </button>
          <button aria-label="Slide sorter">
            <span className="w-6 h-4 border-2 border-[#5c5c5c]" />
          </button>
          <button aria-label="Reading view">
            <span className="w-6 h-4 border-2 border-[#5c5c5c]" />
          </button>
          <button aria-label="Slide show">
            <span className="w-2 h-5 border-b-2 border-[#5c5c5c]" />
          </button>
        </div>
        <input
          type="range"
          aria-label="Zoom"
          defaultValue={60}
          className="appearance-none w-[200px] h-[7px] ml-2 rounded-full bg-[#989898] [&::-webkit-slider-thumb]:appearance-none [&::-webkit-slider-thumb]:size-7 [&::-webkit-slider-thumb]:rounded-full [&::-webkit-slider-thumb]:bg-white [&::-webkit-slider-thumb]:shadow"
        />
        <button aria-label="Zoom in" className="mx-3">
          <svg width="16" height="16" viewBox="0 0 16 16" stroke="#5c5c5c" strokeWidth="3">
            <path d="M1 8h14M8 1v14" />
          </svg>
        </button>
        <span className="ml-4 mr-[34px]">115%</span>
        <button aria-label="Fit slide to window">
          <svg width="24" height="24" viewBox="0 0 24 24" fill="none" stroke="#5c5c5c" strokeWidth="1.600">
            <rect x="1" y="1" width="22" height="22" />
            <path d="M12 3.500v5M12 15.500v5M3.500 12h5M15.500 12h5M10 5.500l2-2 2 2M10 18.500l2 2 2-2M5.500 10l-2 2 2 2M18.500 10l2 2-2 2" />
          </svg>
        </button>
      </div>
    </footer>
  )
}

export default function App() {
  return (
    <div className="flex flex-col min-h-screen overflow-hidden bg-[#ebebeb] font-['Inter',sans-serif]">
      <TitleBar />
      <Ribbon />
      <main className="flex-1 flex">
        <div className="w-2 shrink-0 border-r-2 border-[#c6c6c6] bg-[#f8f8f8]" />
        <div className="relative flex-1 flex flex-col">
          <div className="flex">
            <div className="w-7 h-7 border-r border-b border-[#d0d0d0] bg-[#ebebeb]" />
            <HorizontalRuler />
          </div>
          <div className="flex-1 flex">
            <VerticalRuler />
            <div className="flex-1 flex pt-[44px] pb-[44px] pl-[276px] pr-[274px] border-l-[14px] border-t-[14px] border-[#f5f5f5]">
              <Slide />
            </div>
          </div>
          <div className="h-[76px] pl-3 pt-[13px] border-t-2 border-[#c6c6c6] font-['Liberation_Sans'] text-[23px] leading-[28px] text-black">
            Click to add notes
          </div>
          <button aria-label="Done" className="absolute right-[21px] bottom-[23px] flex items-center justify-center size-[63px] border border-[#d4d4d4] bg-white shadow-[0_4px_16px_rgba(0,0,0,0.3)]">
            <svg width="28" height="22" viewBox="0 0 28 22" fill="none" stroke="#1a9641" strokeWidth="3">
              <path d="M2 11l8 8L26 2" />
            </svg>
          </button>
        </div>
      </main>
      <StatusBar />
    </div>
  )
}
